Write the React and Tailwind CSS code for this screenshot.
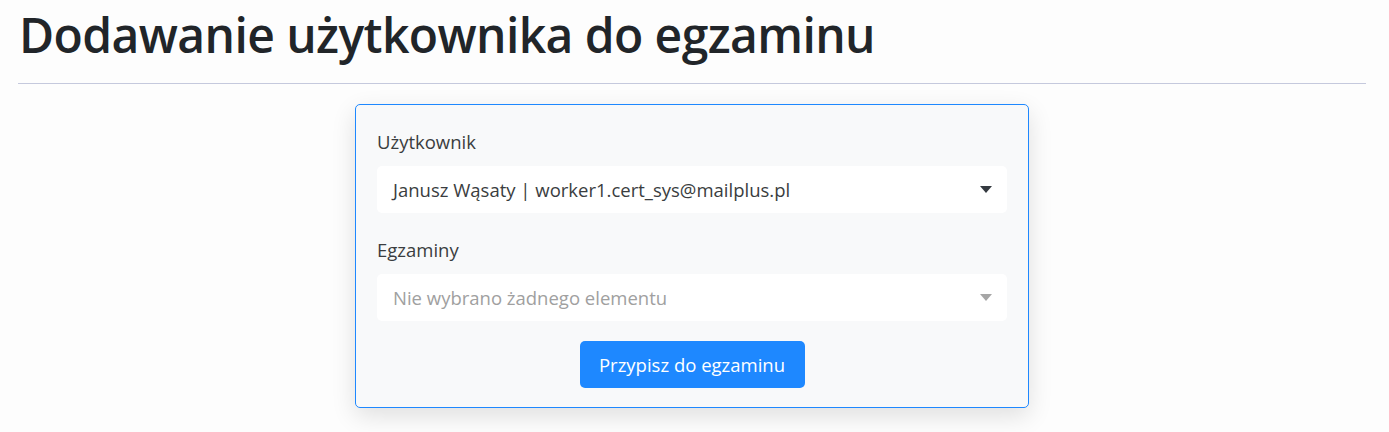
import React from "react"

function Caret({ muted }) {
  return (
    <svg width="12" height="7" viewBox="0 0 12 7" className={muted ? "text-[#a6a6a6]" : "text-[#343a40]"}>
      <path d="M0 0h12L6 7z" fill="currentColor" />
    </svg>
  )
}

export default function App() {
  return (
    <div
      className="min-h-[432px] w-full bg-[#fdfdfd] text-[#212529] pl-[18px] pr-[23px]"
      style={{ fontFamily: '"Open Sans", "Noto Sans", sans-serif' }}
    >
      {/* Header */}
      <h1 className="pt-[2px] pl-[1px] text-[48px] leading-[66px] font-semibold tracking-[-0.6px] text-[#212529]">
        Dodawanie użytkownika do egzaminu
      </h1>
      <div className="mt-[15px] h-px bg-[#c5c9dd]" />

      {/* Form card */}
      <div className="mt-[20px] flex justify-center">
        <div className="w-[674px] rounded-[5px] border border-[#1e88ff] bg-[#f8f9fa] px-[21px] pt-[23px] pb-[19px] shadow-[0_8px_24px_rgba(0,0,0,0.12)]">
          <div className="text-[18.5px] leading-[28px] text-[#3a3d40]">Użytkownik</div>
          <div className="mt-[10px] flex h-[47px] items-center justify-between rounded-[5px] bg-white pl-[16px] pr-[15px]">
            <span className="text-[18.5px] text-[#3a3d40]">Janusz Wąsaty | worker1.cert_sys@mailplus.pl</span>
            <Caret />
          </div>

          <div className="mt-[23px] text-[18.5px] leading-[28px] text-[#3a3d40]">Egzaminy</div>
          <div className="mt-[10px] flex h-[47px] items-center justify-between rounded-[5px] bg-white pl-[16px] pr-[15px]">
            <span className="text-[18.5px] text-[#a0a0a0]">Nie wybrano żadnego elementu</span>
            <Caret muted />
          </div>

          <div className="mt-[20px] flex justify-center">
            <button className="h-[47px] w-[225px] rounded-[5px] bg-[#1e88ff] text-[18.5px] text-white">
              Przypisz do egzaminu
            </button>
          </div>
        </div>
      </div>
    </div>
  )
}
